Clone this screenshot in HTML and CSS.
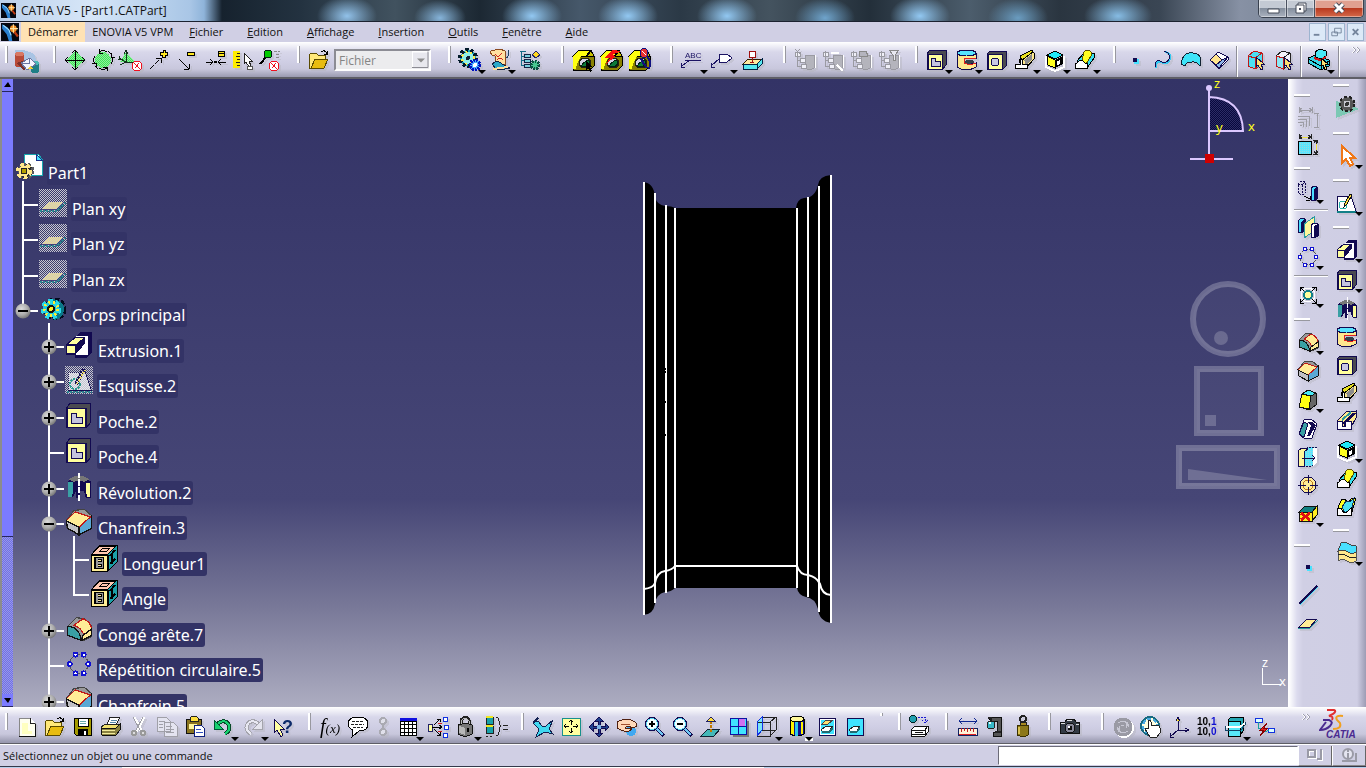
FILE: index.html
```html
<!DOCTYPE html>
<html lang="fr">
<head>
<meta charset="utf-8">
<title>CATIA V5 - [Part1.CATPart]</title>
<link rel="stylesheet" href="styles.css">
</head>
<body>
<svg class="sprite" width="0" height="0" aria-hidden="true">
<defs>
<pattern id="dither" width="2" height="2" patternUnits="userSpaceOnUse"><rect width="1" height="1" fill="#c6c6ce"/><rect x="1" y="1" width="1" height="1" fill="#c6c6ce"/></pattern>
<pattern id="gdither" width="2" height="2" patternUnits="userSpaceOnUse"><rect width="2" height="2" fill="#3fe05a"/><rect width="1" height="1" fill="#8ff09a"/><rect x="1" y="1" width="1" height="1" fill="#8ff09a"/></pattern>
<pattern id="cdither" width="2" height="2" patternUnits="userSpaceOnUse"><rect width="2" height="2" fill="#5ae6ff"/><rect width="1" height="1" fill="#9ad8dc"/></pattern>
<pattern id="ndither" width="2" height="2" patternUnits="userSpaceOnUse"><rect width="2" height="2" fill="#08083c"/><rect width="1" height="1" fill="#2c2c66"/><rect x="1" y="1" width="1" height="1" fill="#2c2c66"/></pattern>
<radialGradient id="ball" cx="40%" cy="35%" r="70%"><stop offset="0" stop-color="#dcdcdc"/><stop offset=".6" stop-color="#aaa"/><stop offset="1" stop-color="#707070"/></radialGradient>
</defs>

<symbol id="i-app" viewBox="0 0 16 16"><rect width="16" height="16" fill="#04060f"/><path d="M1 1l5 3 3 5 1 7h-3l-2-6-4-5z" fill="#2a7fd0"/><path d="M2 2l5 4 2 5" stroke="#9fe0ff" fill="none"/><circle cx="11" cy="5" r="3" fill="#f08a20"/><path d="M8 5h7M11 1v8" stroke="#ffe2a0"/><path d="M12 8l3 4" stroke="#c03a10" stroke-width="2"/></symbol>

<symbol id="i-send" viewBox="0 0 28 28"><path d="M2 4q12-1 20 5l2 12-12 3-10-3z" fill="#a9c4e4"/><path d="M2 8v12q4 3 9 0V8z" fill="#b84a38"/><ellipse cx="6.500" cy="8" rx="4.500" ry="2" fill="#d87864"/><path d="M3 17l8 7 4-4-6-5z" fill="#7c302a"/><path d="M18 17v9q4 2 8 0v-9z" fill="#1f7f86"/><ellipse cx="22" cy="17" rx="4" ry="2" fill="#4cb8b8"/><path d="M8 17l9-5 6 6-9 6z" fill="#f4f4ff" stroke="#6a74a0"/><path d="M8 17l8 1 1-6" fill="none" stroke="#6a74a0"/><path d="M14 23l3-3 3 3z" fill="#f0d040"/></symbol>
<symbol id="i-move" viewBox="0 0 28 28"><path d="M14 5l9 9-9 9-9-9z" fill="url(#gdither)"/><path d="M4 14h20M14 4v20M11 7l3-3 3 3M11 21l3 3 3-3M7 11l-3 3 3 3M21 11l3 3-3 3" stroke="#000" fill="none"/></symbol>
<symbol id="i-rot" viewBox="0 0 28 28"><circle cx="14" cy="14" r="8" fill="url(#gdither)"/><path d="M10 6q4-3 8 0M22 10q3 4 0 8M18 22q-4 3-8 0M6 18q-3-4 0-8M10 3v4h4M26 11h-4v-4M18 25v-4h-4M3 17h4v4M19 5l3 3M6 20l3 3" stroke="#000" fill="none"/></symbol>
<symbol id="i-noplane" viewBox="0 0 28 28"><path d="M9 6l9 10H3z" fill="url(#gdither)"/><path d="M9 4v12M7 8l2-4 2 4M9 16l-7-4M9 16l-6 3M9 16h10M3 10l-1 3 3 0" stroke="#12301a" fill="none"/><circle cx="20" cy="20" r="5" fill="#fff" stroke="#f01020"/><path d="M17 17l6 6M18 22l4-5" stroke="#f01020"/></symbol>
<symbol id="i-plus" viewBox="0 0 28 28"><path d="M5 23L16 12M16 12h-5M16 12v5" stroke="#000" stroke-dasharray="6 1"/><path d="M18 4h2v2h2v3h-2v2h-3V9h-2V6h3z" fill="#ffe820" stroke="#000"/></symbol>
<symbol id="i-minus" viewBox="0 0 28 28"><path d="M6 13l10 10M16 23v-5M16 23h-5" stroke="#000"/><path d="M14 6h7v3h-7z" fill="#ffe820" stroke="#000"/></symbol>
<symbol id="i-equal" viewBox="0 0 28 28"><path d="M5 16h7M9 13l3 3-3 3M25 16h-8M20 13l-3 3 3 3" stroke="#000" fill="none"/><circle cx="14.500" cy="16" r="1.500"/><path d="M17 5h6v5h-6z" fill="#ffe820" stroke="#000"/><path d="M17 7h6" stroke="#000"/></symbol>
<symbol id="i-ruler" viewBox="0 0 28 28"><path d="M4 5h7v17H4z" fill="#ffee00"/><path d="M8 7h3M7 10h4M8 13h3M7 16h4M8 19h3" stroke="#222"/><path d="M15 7v11l2-2 3 5 2-1-2-5h3z" fill="#fff" stroke="#222"/><path d="M18 20h5v3h-5z" fill="#fff" stroke="#555"/></symbol>
<symbol id="i-nopin" viewBox="0 0 28 28"><path d="M10 10L3 18" stroke="#000" stroke-width="2"/><circle cx="11" cy="8" r="4" fill="#0c0" stroke="#021"/><path d="M17 5h6M19 8h4M19 11h4" stroke="#888" stroke-dasharray="3 1"/><circle cx="17" cy="20" r="5" fill="#fff" stroke="#f01020"/><path d="M14 17l6 6M15 22l4-5" stroke="#f01020"/></symbol>
<symbol id="i-folder" viewBox="0 0 28 28"><path d="M4 9l2-2h5l2 2h7v4h-9l-5 9H4z" fill="#ffe87a" stroke="#5a4a00"/><path d="M10 13h13l-4 9H6z" fill="#e8bc10" stroke="#5a4a00"/><path d="M16 6q4-3 6 2M22 9l-3-1M22 9l1-4" stroke="#000" fill="none"/></symbol>
<symbol id="i-gears" viewBox="0 0 28 28"><circle cx="12" cy="12" r="8" fill="#18a8b8" stroke="#021a2a" stroke-width="4" stroke-dasharray="3 2"/><circle cx="12" cy="12" r="6" fill="#8ff0e8" stroke="#ffe94a" stroke-width="2" stroke-dasharray="2 3"/><circle cx="12" cy="12" r="2" fill="#123"/><circle cx="19" cy="19" r="5" fill="#4aa8ff" stroke="#0010c0" stroke-width="3" stroke-dasharray="2 1"/><circle cx="19" cy="19" r="2" fill="#fff"/></symbol>
<symbol id="i-scroll" viewBox="0 0 28 28"><path d="M5 5q9-3 14 0v13H9V10q-5 0-4-5z" fill="#ffe0a0" stroke="#8a4a20"/><path d="M9 8l3 3 4-4M11 14q3-3 6 0" stroke="#d02020" fill="none"/><path d="M6 18q6-5 10 0l8 4q-7 2-14 1z" fill="#2aa8c8" stroke="#124"/><path d="M20 12q4-2 2-8" stroke="#246" fill="none"/><path d="M7 23l15-2" stroke="#ffe0a0" stroke-width="2"/></symbol>
<symbol id="i-treegear" viewBox="0 0 28 28"><path d="M5 6v13M5 10h8M5 14h8M5 19h8M4 5h6" stroke="#146a86"/><path d="M8 8h6v3H8zM8 13h6v3H8zM8 18h6v3H8z" fill="#7ad0e0" stroke="#124"/><path d="M16 9l4-4 4 4-4 3z" fill="#ffd820" stroke="#226"/><circle cx="19" cy="19" r="4" fill="#48c890" stroke="#0a5040" stroke-width="3" stroke-dasharray="2 1"/></symbol>
<symbol id="nut" viewBox="0 0 28 28"><path d="M4 10l6-6h12l3 6v10l-4 4H4z" fill="#8a8200" stroke="#000"/><path d="M4 10l6-6h12l-5 6z" fill="#ffff10" stroke="#000"/><path d="M4 10h8l-4 8-1 5H4z" fill="#ffff10"/><path d="M22 5l3 5-7 0z" fill="#c8c000" stroke="#000"/><ellipse cx="16" cy="17" rx="6" ry="5" fill="#d4d4e6" stroke="#221"/><path d="M12 20q6-8 9-4q-1 5-6 5z" fill="#0a7a38" stroke="#021"/></symbol>
<symbol id="i-nut1" viewBox="0 0 28 28"><use href="#nut"/><path d="M17 15v9l2-2 2 4 2-1-2-4h3z" fill="#000"/></symbol>
<symbol id="i-nut2" viewBox="0 0 28 28"><use href="#nut"/><path d="M15 4l-8 8 6 0-4 6 10-8-4-1 9-4z" fill="#f81010"/></symbol>
<symbol id="i-nut3" viewBox="0 0 28 28"><use href="#nut"/><ellipse cx="19" cy="7" rx="4" ry="5" fill="#e83030" stroke="#101080"/><path d="M17 5l4 4" stroke="#fff"/><path d="M22 11q5 4 2 12M16 12q1 4 6 10" stroke="#101080" stroke-width="2" fill="none"/></symbol>
<symbol id="i-tag" viewBox="0 0 28 28"><path d="M11 8h8l5 4-5 4h-8z" fill="#fff" stroke="#1c1464"/><path d="M11 13l-8 7M3 21v-4M3 21h4" stroke="#1c1464" fill="none"/></symbol>
<symbol id="i-stamp" viewBox="0 0 28 28"><path d="M5 18l5-5h14l-5 5z" fill="#ffe9a0" stroke="#302000"/><path d="M5 18h14v5H5zM19 18l5-5v5l-5 5z" fill="#58e8f0" stroke="#024"/><path d="M11 5h6v6h-6z" fill="#fff" stroke="#a01010"/><path d="M14 11v5M12 16h4" stroke="#a01010"/></symbol>
<symbol id="gcyl" viewBox="0 0 28 28"><path d="M14 9h9v13q-5 3-9 0z" fill="#b4b4bc" stroke="#9a9aa2"/><path d="M6 5v16M4 6h5v4H4zM6 14h4M6 20h4M9 12h5v4H9zM10 18h5v4h-5z" stroke="#9a9aa2" fill="#f0f0f8"/><path d="M24 9v13" stroke="#fff"/></symbol>
<symbol id="i-g1" viewBox="0 0 28 28"><use href="#gcyl"/><path d="M4 3l5 5M9 3L4 8" stroke="#9a9aa2"/></symbol>
<symbol id="i-g2" viewBox="0 0 28 28"><use href="#gcyl"/><path d="M12 7h8M18 19l6 6" stroke="#fff" stroke-width="2"/></symbol>
<symbol id="i-g3" viewBox="0 0 28 28"><use href="#gcyl"/><path d="M12 5h7l2 5-9 1z" fill="#b4b4be" stroke="#888"/></symbol>
<symbol id="i-g4" viewBox="0 0 28 28"><use href="#gcyl"/><path d="M14 4h10l-4 5v5h-2V9z" fill="#e8e8f0" stroke="#888"/></symbol>

<symbol id="i-pocket" viewBox="0 0 28 28"><path d="M4 8l3-4h16v15l-3 4H4z" fill="#4a4a50" stroke="#120a50"/><path d="M5 8h14v15H5z" fill="#ffff9c" stroke="#120a50"/><path d="M4 8h1v15h-1zM19 8h1v15h-1z" fill="#120a50"/><path d="M8 12h4v3h5v5H8z" fill="#c4c4de" stroke="#120a50"/></symbol>
<symbol id="i-groove" viewBox="0 0 28 28"><path d="M4 7v14q9 6 19 0v-4l-6 1-6-2 1-4h11V7z" fill="#ffe88e" stroke="#120a50"/><ellipse cx="13.500" cy="7" rx="9.500" ry="3" fill="#58e4ff" stroke="#120a50"/><path d="M23 12H11v5l6 2 6-2" stroke="#e02020" fill="none"/><path d="M13 14h6l3 2-6 2-4-1z" fill="#34404a"/></symbol>
<symbol id="i-hole" viewBox="0 0 28 28"><path d="M4 8l3-3h16v15l-3 3H4z" fill="#4a4a50" stroke="#120a50"/><path d="M5 8h14v15H5z" fill="#ffff9c" stroke="#120a50"/><circle cx="12" cy="16" r="4" fill="#c8c8e4" stroke="#120a50"/></symbol>
<symbol id="i-rib" viewBox="0 0 28 28"><path d="M8 16l2-6L21 5l2 2v6l-8 9z" fill="#ffe98e" stroke="#000"/><path d="M9 10l12-6 1 2-11 8z" fill="#e8e020" stroke="#000"/><path d="M13 14l8-6v5l-6 6z" fill="#8c8c8c"/><path d="M4 18h5v-5h2v5h5v4H4z" fill="#fff" stroke="#000"/></symbol>
<symbol id="i-slot" viewBox="0 0 28 28"><path d="M4 14l9-9 10-1v7L17 22H4z" fill="#ffe98e" stroke="#120a50"/><path d="M10 15l9-9 4 0-8 9v4h-4z" fill="#120a50"/><path d="M9 13l9-8" stroke="#2a9aa0" stroke-width="2"/><path d="M4 14h5v5h3v-5h6v8H4z" fill="#fff" stroke="#120a50"/></symbol>
<symbol id="i-cube" viewBox="0 0 28 28"><path d="M5 10v11l9 4 9-4V10" fill="none" stroke="#fff" stroke-width="2"/><path d="M6 9l8-4 8 4-8 4z" fill="#20e8f8" stroke="#000"/><path d="M6 10l8 4v8l-7-3z" fill="#ffff20" stroke="#000"/><path d="M14 14l8-4v8l-8 4z" fill="#000"/><path d="M16 15l3-1v4l-3 1z" fill="#fff"/></symbol>
<symbol id="i-loft" viewBox="0 0 28 28"><path d="M6 15l7-8h10v5L16 22H6z" fill="#38e0f0" stroke="#000"/><path d="M11 14l2-8q4-4 7 0v4l-5 8z" fill="#ffff20" stroke="#5a5000"/><path d="M4 22v-5h2q4-5 8 0h2v5z" fill="#fff" stroke="#000"/></symbol>
<symbol id="i-rloft" viewBox="0 0 28 28"><path d="M5 14l4-8h3l3 4 4-5h4l-5 17H5z" fill="#ffff20" stroke="#000"/><path d="M9 14l4-6 4 1 4-4-2 10-7 5z" fill="#48e0f4" stroke="#135"/><path d="M4 22v-7h4q2 6 6 4l4-4v7z" fill="#fff" stroke="#000"/></symbol>
<symbol id="i-point" viewBox="0 0 28 28"><path d="M13 13h5v5h-5z" fill="#4ae2ff"/><path d="M12 12h4v4h-4z" fill="#120a50"/></symbol>
<symbol id="i-spline" viewBox="0 0 28 28"><path d="M7 22q0-8 5-6q6 4 9-3q2-6-5-7" fill="none" stroke="#32c8f0" stroke-width="2"/><path d="M6 21q0-8 5-6q6 4 9-2q2-6-5-8" fill="none" stroke="#120a50"/></symbol>
<symbol id="i-sweep" viewBox="0 0 28 28"><path d="M4 18Q6 5 16 7q8 0 8 9l-1 4q-4-5-8-4-6 0-7 4z" fill="#3ee4f8" stroke="#123"/></symbol>
<symbol id="i-pbox" viewBox="0 0 28 28"><path d="M5 14l8-8 10 5v3l-9 9z" fill="#fff" stroke="#120a50"/><path d="M5 14l6-6 6 6-5 6z" fill="#ffe48c" stroke="#120a50"/><path d="M17 14l6-3-9 11-3-3z" fill="#8fb8e8" stroke="#120a50"/></symbol>
<symbol id="i-cc1" viewBox="0 0 28 28"><path d="M7 10l6-5 8 2v11l-7 5-7-3z" fill="#4ce0f4" stroke="#c01818"/><path d="M7 10l7 2 7-5M14 12v11" stroke="#c01818" fill="none"/><path d="M15 11v10l2-2 3 5 2-1-2-5h3z" fill="#ffe070" stroke="#120a50"/></symbol>
<symbol id="i-cc2" viewBox="0 0 28 28"><path d="M7 10l6-5 8 2v11l-7 5-7-3z" fill="#f4f4fc" stroke="#222"/><path d="M7 10l7 2v11l-7-3z" fill="#8ce8f4" stroke="#c01818"/><path d="M14 12l7-5" stroke="#222"/><path d="M15 11v10l2-2 3 5 2-1-2-5h3z" fill="#ffe070" stroke="#120a50"/></symbol>
<symbol id="i-asm" viewBox="0 0 28 28"><path d="M3 12l8-3 13 5v6l-8 4-13-7z" fill="#34d8e8" stroke="#000"/><path d="M3 13l13 7 8-5M16 20v4" fill="none" stroke="#000"/><path d="M10 6l5-3 6 2v5l-5 3-6-2z" fill="#48e8f4" stroke="#000"/><path d="M9 12l6 2 6-3" stroke="#d01818" stroke-width="2" fill="none"/><path d="M16 12v9l2-2 2 5 2-1-2-5h3z" fill="#ffe070" stroke="#000"/></symbol>

<symbol id="i-new" viewBox="0 0 28 28"><path d="M6 5h11l5 5v13H6z" fill="#fffff0" stroke="#888"/><path d="M17 5v5h5" fill="#fff" stroke="#222"/><path d="M9 10h6v8h4v3H9z" fill="#ffffc0"/><path d="M6 23h16V11" fill="none" stroke="#111"/></symbol>
<symbol id="i-save" viewBox="0 0 28 28"><path d="M5 5h17v17H7l-2-2z" fill="#a59a00" stroke="#000"/><path d="M9 5h10v8H9z" fill="#fff" stroke="#000"/><path d="M11 8h6M11 10h6" stroke="#6aa"/><path d="M9 16h10v6H9z" fill="#000"/><path d="M15 18h2v4h-2z" fill="#fff"/></symbol>
<symbol id="i-print" viewBox="0 0 28 28"><path d="M10 12l3-8h10l-4 8z" fill="#fff" stroke="#222"/><path d="M14 7h6M13 9h6" stroke="#58a"/><path d="M4 14l5-3h14l-4 4H4z" fill="#f0e070" stroke="#222"/><path d="M4 15h15l4-4v6l-4 5H5z" fill="#8a8240" stroke="#111"/><path d="M5 17h13M5 20h13" stroke="#f4ec9c"/></symbol>
<symbol id="i-cut" viewBox="0 0 28 28"><path d="M9 4l8 15M19 4l-8 15" stroke="#fff" stroke-width="3"/><path d="M8 4l8 15M18 4l-8 15" stroke="#a0a0a8"/><circle cx="9" cy="20" r="2" fill="#ddd" stroke="#999" stroke-width="2"/><circle cx="18" cy="20" r="2" fill="#ddd" stroke="#999" stroke-width="2"/></symbol>
<symbol id="i-copy" viewBox="0 0 28 28"><path d="M4 4h9l4 4v10H4zM11 9h9l4 4v10H11z" fill="#e4e4f0" stroke="#a0a0a8"/><path d="M6 8h6M6 11h4M6 14h4M13 13h6M13 16h8M13 19h8" stroke="#a0a0a8"/></symbol>
<symbol id="i-paste" viewBox="0 0 28 28"><path d="M5 6h15v14H5z" fill="#8a7420" stroke="#111"/><path d="M9 5l2-2h4l2 2v3H9z" fill="#ffe040" stroke="#222"/><path d="M8 11h8v5H8z" fill="#fff6a0"/><path d="M13 12h7l3 3v8H13z" fill="#fff" stroke="#102080"/><path d="M15 16h5M15 19h7" stroke="#3050c0"/></symbol>
<symbol id="i-undo" viewBox="0 0 28 28"><path d="M8 11q8-6 12 1 2 5-4 9" fill="none" stroke="#064a28" stroke-width="4"/><path d="M8 11q8-6 12 1 2 5-4 9" fill="none" stroke="#18d070" stroke-width="2"/><path d="M5 7v9h9z" fill="#18d070" stroke="#053"/></symbol>
<symbol id="i-redo" viewBox="0 0 28 28"><path d="M20 11q-8-6-12 1-2 5 4 9" fill="none" stroke="#a4a4ac" stroke-width="4"/><path d="M20 11q-8-6-12 1-2 5 4 9" fill="none" stroke="#e8e8f2" stroke-width="2"/><path d="M23 7v9h-9z" fill="#e4e4ee" stroke="#a4a4ac"/></symbol>
<symbol id="i-talk" viewBox="0 0 28 28"><path d="M14 4q10 0 10 7t-9 7l-7 6 1-7q-5-2-5-6 0-7 10-7z" fill="#fff" stroke="#000"/><path d="M8 8h12M7 11h13M9 14h10" stroke="#222" stroke-dasharray="3 1"/></symbol>
<symbol id="i-link" viewBox="0 0 28 28"><circle cx="14" cy="8" r="3" fill="#e0e0ea" stroke="#aaaab2" stroke-width="2"/><circle cx="14" cy="19" r="3" fill="#e0e0ea" stroke="#aaaab2" stroke-width="2"/><path d="M14 10v7" stroke="#aaaab2" stroke-width="2"/></symbol>
<symbol id="i-table" viewBox="0 0 28 28"><path d="M6 8h16v14H6z" fill="#fff" stroke="#000"/><path d="M6 5h17v3H6z" fill="#1010e0"/><path d="M6 11h16M6 15h16M6 19h16M10 8v14M14 8v14M18 8v14" stroke="#000" fill="none"/></symbol>
<symbol id="i-rel" viewBox="0 0 28 28"><path d="M4 11h4v7H4z" fill="#ffffa0" stroke="#226"/><path d="M8 14h10M10 12l6-6M10 16l6 6M13 6h3v3M15 12l3 2-3 2M16 19v3h-3" stroke="#000" fill="none"/><path d="M19 4h4v4h-4zM20 12h4v4h-4zM19 20h4v4h-4z" fill="#fff" stroke="#1030e0"/><path d="M14 10h4M14 18h4" stroke="#d02020"/></symbol>
<symbol id="i-lock" viewBox="0 0 28 28"><path d="M9 12V7q5-6 8 0v5" fill="none" stroke="#222" stroke-width="3"/><path d="M9 12V8q4-6 8 0v5" fill="none" stroke="#bbb"/><path d="M6 12l8-2 6 2v9l-7 3-7-3z" fill="#777" stroke="#111"/><path d="M7 13l6 2v7l-6-2z" fill="#b8b8b8"/><path d="M16 15v4" stroke="#000" stroke-width="2"/></symbol>
<symbol id="i-rule" viewBox="0 0 28 28"><path d="M4 4h7v7H4zM4 13h7v7H4z" fill="#18a0a8" stroke="#222"/><path d="M4 4h7M4 13h7" stroke="#f0e820" stroke-width="2"/><path d="M4 23h2M8 23h2" stroke="#222"/><path d="M14 4q3 0 3 4v3l2 2-2 2v4q0 4-3 4M21 12h5M21 16h5" stroke="#222" fill="none"/></symbol>
<symbol id="i-fly" viewBox="0 0 28 28"><path d="M5 8l4 0 4 5 4 0 7-6-4 9 4 5-8-2-9 5 3-8-6-6z" fill="#40d8f0" stroke="#122050"/><path d="M4 10l5-5" stroke="#122050" stroke-width="2"/></symbol>
<symbol id="i-fit" viewBox="0 0 28 28"><path d="M5 5h18v17H5z" fill="#ffffa0" stroke="#18908c"/><path d="M14 7v5M14 20v-5M7 13h5M21 13h-5M12 9l2-2 2 2M12 18l2 2 2-2M9 11l-2 2 2 2M19 11l2 2-2 2" stroke="#000" fill="none"/></symbol>
<symbol id="i-pan" viewBox="0 0 28 28"><path d="M14 4l4 4h-3v5h5v-3l4 4-4 4v-3h-5v5h3l-4 4-4-4h3v-5H8v3l-4-4 4-4v3h5V8h-3z" fill="#20408c" stroke="#120a50"/><path d="M12 12h4v4h-4z" fill="#7db2e4"/></symbol>
<symbol id="i-rotate" viewBox="0 0 28 28"><circle cx="18" cy="18" r="5" fill="#40a8f0"/><path d="M4 9q7-4 14-2 6 2 6 6l-4 2q-6-3-8 0l7 1-4 3q-6-1-11-4z" fill="#ffd8b8" stroke="#502010"/><path d="M8 11h9" stroke="#a05030"/></symbol>
<symbol id="mag" viewBox="0 0 28 28"><path d="M15 15l8 8" stroke="#120a50" stroke-width="4"/><path d="M16 16l6 6" stroke="#70c8f4" stroke-width="2"/><circle cx="11" cy="11" r="6.500" fill="#f4ffff" stroke="#120a50"/><circle cx="11" cy="11" r="5.500" fill="none" stroke="#5ad8f0"/></symbol>
<symbol id="i-zin" viewBox="0 0 28 28"><use href="#mag"/><path d="M8 11h6M11 8v6" stroke="#000" stroke-width="2"/></symbol>
<symbol id="i-zout" viewBox="0 0 28 28"><use href="#mag"/><path d="M8 11h6" stroke="#000" stroke-width="2"/></symbol>
<symbol id="i-normal" viewBox="0 0 28 28"><path d="M4 23l7-7h12l-6 7z" fill="#44b8b8" stroke="#123"/><path d="M14 8v12" stroke="#c07800" stroke-width="2" stroke-dasharray="3 1"/><path d="M14 4l-4 4h8z" fill="#ffe040" stroke="#222060"/></symbol>
<symbol id="i-multi" viewBox="0 0 28 28"><path d="M8 8h16v16H8z" fill="#777"/><path d="M5 5h16v16H5z" fill="#40e4ff" stroke="#1010a0"/><path d="M13 6h7v7h-7z" fill="#d070f0"/><path d="M13 5v16M5 13h16" stroke="#1010a0"/></symbol>
<symbol id="i-iso" viewBox="0 0 28 28"><path d="M4 9l5-5v14l-5 5z" fill="#7ae4f8"/><path d="M4 9h13v14H4zM4 9l5-5h14l-6 5M23 4v13l-6 6M9 4v13h14" fill="none" stroke="#222"/><path d="M4 9v14l5-6V4z" fill="none" stroke="#1030e0"/></symbol>
<symbol id="i-shade" viewBox="0 0 28 28"><path d="M7 6v15q7 4 14 0V6z" fill="#10108c" stroke="#000"/><path d="M8 8h3v14l-3-1zM18 9h2v12h-2z" fill="#fff200"/><path d="M12 9h3v14h-3z" fill="#30c8e8"/><ellipse cx="14" cy="6" rx="7" ry="3" fill="#fff89a" stroke="#000"/></symbol>
<symbol id="i-hide" viewBox="0 0 28 28"><path d="M6 5h16v17H6z" fill="#40e4ff" stroke="#120a50"/><path d="M7 6h14v15H7z" fill="none" stroke="#fff"/><path d="M8 17l5-4h7l-4 5H9z" fill="#fff" stroke="#222"/><path d="M9 11l4-4h7l-5 4z" fill="#ffe070" stroke="#444"/><path d="M16 18l4-5v3l-4 4H9v-2z" fill="#226a70"/></symbol>
<symbol id="i-swap" viewBox="0 0 28 28"><path d="M6 5h16v17H6z" fill="#40e4ff" stroke="#120a50"/><path d="M8 17l5-4h6l-3 5H9z" fill="#fff" stroke="#222"/><path d="M16 18l3-5v3l-3 4H9v-2z" fill="#226a70"/></symbol>
<symbol id="i-cap" viewBox="0 0 28 28"><circle cx="7" cy="6" r="3.500" fill="#20a0b0" stroke="#022"/><path d="M12 4h7v5M16 7l3 3 3-3" stroke="#1818d0" fill="none" stroke-dasharray="2 1"/><path d="M5 17l4-4h13v6l-3 4H5z" fill="#fff" stroke="#111"/><path d="M5 17h14v6M19 17l3-4M9 19h8M5 21h14" fill="none" stroke="#111"/></symbol>
<symbol id="i-meas" viewBox="0 0 28 28"><path d="M6 8h18M9 5L6 8l3 3M21 5l3 3-3 3" stroke="#102890" fill="none"/><path d="M5 15h19v7H5z" fill="#fff2d8" stroke="#102060"/><path d="M6 21h17" stroke="#e02020"/><path d="M8 15v4M11 15v3M14 15v4M17 15v3M20 15v4" stroke="#c02020"/></symbol>
<symbol id="i-caliper" viewBox="0 0 28 28"><path d="M10 4h10v19h-8v-3l4-2V8h-6z" fill="#555" stroke="#111"/><circle cx="10" cy="12" r="4" fill="#38b8c8" stroke="#222"/><path d="M7 5h3v4M14 19h6" stroke="#222" stroke-width="2"/><circle cx="9" cy="10" r="1.500" fill="#dff"/></symbol>
<symbol id="i-weight" viewBox="0 0 28 28"><circle cx="14" cy="6" r="3" fill="none" stroke="#222" stroke-width="2"/><path d="M11 9h6v3h-6z" fill="#a88a20" stroke="#222"/><path d="M8 12h11v10q-5 3-11 0z" fill="#8c7818" stroke="#3a3000"/><path d="M10 14v7" stroke="#d8c050" stroke-width="2"/></symbol>
<symbol id="i-camera" viewBox="0 0 28 28"><path d="M4 9h5l2-3h7l2 3h3v11H4z" fill="#333a44" stroke="#111"/><path d="M5 10h4M20 11h3M11 7h5" stroke="#ddd"/><circle cx="14" cy="15" r="5" fill="#889" stroke="#111"/><circle cx="14" cy="15" r="2.500" fill="#111"/><circle cx="13" cy="14" r="1" fill="#fff"/></symbol>
<symbol id="i-update" viewBox="0 0 28 28"><circle cx="15" cy="15" r="9" fill="none" stroke="#fff" stroke-width="2"/><circle cx="14" cy="14" r="8" fill="#c8c8d4" stroke="#9a9aa4" stroke-width="3"/><path d="M8 14q4-6 9-2M20 14q-4 6-9 2M11 14h6" stroke="#9a9aa4" stroke-width="3" fill="none"/></symbol>
<symbol id="i-hand" viewBox="0 0 28 28"><circle cx="13" cy="13" r="9" fill="#ffffe0" stroke="#186a80" stroke-width="2"/><circle cx="13" cy="13" r="7" fill="none" stroke="#48a8e0" stroke-width="2" stroke-dasharray="4 2"/><path d="M11 8q2-2 3 1v4q2-2 3 0 2-2 3 0 3-1 3 2v5l-3 4h-7l-5-8q2-2 3 0z" fill="#fff" stroke="#222"/></symbol>
<symbol id="i-axis" viewBox="0 0 28 28"><path d="M13 5v12M13 17h11M13 17l-8 7M11 8l2-4 2 4M20 15l4 2-4 2M5 20v4h4" stroke="#120a50" fill="none"/><path d="M12 8l1-3 1 3z" fill="#ffe820"/></symbol>
<symbol id="i-mean" viewBox="0 0 28 28"><path d="M7 7l3-3h12v14l-3 5H7z" fill="#24a8b4" stroke="#000"/><path d="M7 8h12v15H7z" fill="#58e8f8" stroke="#000"/><path d="M4 14h15l5-4" fill="none" stroke="#fff" stroke-width="2"/><path d="M4 13v4h16l4-5V9" stroke="#146" fill="none"/></symbol>
<symbol id="i-bolt" viewBox="0 0 28 28"><path d="M4 5h7v4H4zM17 15h6v4h-6z" fill="#dff" stroke="#1030e0"/><path d="M7 9v6h4M14 19l4-2" stroke="#18a0a0" fill="none"/><path d="M16 10l-7 7h4l-4 6 8-8h-4z" fill="#e02020" stroke="#800"/></symbol>

<symbol id="i-cons" viewBox="0 0 28 28"><path d="M5 4v6M18 4v6M5 7h13M8 5L5 7l3 2M15 5l3 2-3 2M23 10v14M20 10h5M20 24h5M4 13h11v10M4 16h8v8M4 19h5v5M6 22h2" fill="none" stroke="#9c9ca4"/></symbol>
<symbol id="i-dim" viewBox="0 0 28 28"><path d="M4 10h13v13H4z" fill="url(#cdither)" stroke="#000"/><path d="M5 3v5M17 3v5M5 6h12M8 4L5 6l3 2M14 4l3 2-3 2M22 9v14M19 9h5M19 23h5M20 12l2-3 2 3M20 20l2 3 2-3" fill="none" stroke="#222"/><path d="M8 6h6M22 13v6" stroke="#f0e040"/></symbol>
<symbol id="i-trans" viewBox="0 0 28 28"><path d="M4 7l3-3 4 1v11l-3 2-4-2zM4 7l4 1 3-3M8 8v10" fill="none" stroke="#120a50" stroke-dasharray="2 1"/><path d="M10 19l6 3M16 23v-4M16 23h-4" stroke="#000"/><path d="M17 11l3-2 3 1v12l-3 2-3-1z" fill="#48e0ff" stroke="#120a50"/><path d="M20 12l3-2v12l-3 2z" fill="#120a50"/></symbol>
<symbol id="i-mirror" viewBox="0 0 28 28"><path d="M4 7l3-3 4 1v12l-4 2-3-1z" fill="#48e0ff" stroke="#120a50"/><path d="M7 8l4-3v12l-4 2z" fill="#120a50"/><path d="M10 10l10-7v14l-10 7z" fill="#fff79a" stroke="#2a9aa0"/><path d="M17 11l3-2 4 1v12l-4 2-3-1z" fill="#fff" stroke="#120a50"/><path d="M20 12l4-2v12l-4 2z" fill="#120a50"/></symbol>
<symbol id="i-pattern" viewBox="0 0 28 28"><circle cx="14" cy="14" r="8" fill="none" stroke="#555" stroke-dasharray="2 1"/><g fill="#1010d0"><circle cx="11" cy="6" r="2.500"/><circle cx="18" cy="6" r="2.500"/><circle cx="6" cy="14" r="2.500"/><circle cx="22" cy="14" r="2.500"/><circle cx="11" cy="22" r="2.500"/><circle cx="18" cy="22" r="2.500"/></g><g fill="#fff"><circle cx="11" cy="6" r="1"/><circle cx="18" cy="6" r="1"/><circle cx="6" cy="14" r="1"/><circle cx="22" cy="14" r="1"/><circle cx="11" cy="22" r="1"/><circle cx="18" cy="22" r="1"/></g></symbol>
<symbol id="i-scale" viewBox="0 0 28 28"><path d="M6 6l16 16M22 6L6 22M6 10V6h4M18 6h4v4M6 18v4h4M18 22h4v-4" stroke="#000" fill="none"/><circle cx="14" cy="14" r="7" fill="none" stroke="#fff"/><circle cx="14" cy="14" r="4" fill="#ffff9c" stroke="#128088" stroke-width="2"/></symbol>
<symbol id="i-fillet" viewBox="0 0 28 28"><path d="M5 12l7-7 6 1 6 6v8l-6 3z" fill="#999" stroke="#444"/><path d="M5 12q9 0 11 11l-11-4z" fill="#3aa0a4" stroke="#111"/><path d="M10 11l7-5q6 2 7 8l-6 5q-2-6-8-8z" fill="#ffec96" stroke="#c01818"/><path d="M16 23l8-4v-5l-7 5z" fill="#ffec96" stroke="#111"/></symbol>
<symbol id="i-chamfer" viewBox="0 0 28 28"><path d="M10 5l8-1 6 5v10l-10 5-10-6v-5z" fill="#999" stroke="#444"/><path d="M14 17l10-8v10l-10 5z" fill="#5aa8d4" stroke="#111"/><path d="M4 13l7-7 12 4-9 8z" fill="#ffec96" stroke="#c01818"/><path d="M4 13l10 5v6L5 19z" fill="#c0c0c4" stroke="#111"/></symbol>
<symbol id="i-draft" viewBox="0 0 28 28"><path d="M9 8l5-4 8 3v12l-7 5-9-3z" fill="#666" stroke="#111"/><path d="M8 8l6-4 8 3-5 3z" fill="#48e8f4" stroke="#111"/><path d="M8 8l9 2-2 13-10-2z" fill="#ffff10" stroke="#111"/></symbol>
<symbol id="i-shell" viewBox="0 0 28 28"><path d="M10 5l7-1 6 5-5 14-7 1-6-5z" fill="#fff" stroke="#120a50"/><path d="M5 19l5-12 4 2-4 13z" fill="#3aa0a4" stroke="#120a50"/><path d="M13 7l5 0 4 3-6 11-3 0 4-10z" fill="#120a50"/></symbol>
<symbol id="i-thick" viewBox="0 0 28 28"><path d="M10 7l5-3h8l-1 15-4 4h-8z" fill="url(#cdither)" stroke="#120a50" stroke-dasharray="2 1"/><path d="M19 5h4v14l-4 4z" fill="#fff"/><path d="M4 8l4-3 6 1-4 3v14H4z" fill="#fff79a" stroke="#120a50"/><path d="M8 15h13M18 12l3 3-3 3" stroke="#120a50" fill="none"/></symbol>
<symbol id="i-thread" viewBox="0 0 28 28"><circle cx="14" cy="14" r="8" fill="#ffec96" stroke="#120a50"/><circle cx="14" cy="14" r="5" fill="none" stroke="#c07820"/><path d="M4 14h8M16 14h8M14 4v8M14 16v8" stroke="#120a50"/></symbol>
<symbol id="i-remove" viewBox="0 0 28 28"><path d="M5 12l6-6h12l-5 6z" fill="#128080" stroke="#111"/><path d="M18 12l5-6v9l-5 6z" fill="#ffee20" stroke="#111"/><path d="M5 12h13v9H5z" fill="#ffee20" stroke="#111"/><path d="M7 13l9 7M16 13l-9 7" stroke="#e01010" stroke-width="3"/></symbol>
<symbol id="i-line" viewBox="0 0 28 28"><path d="M6 24L24 6" stroke="#4ae2ff"/><path d="M5 23L23 5" stroke="#120a50" stroke-width="2"/></symbol>
<symbol id="i-plane" viewBox="0 0 28 28"><path d="M5 18l8-8h10l-7 8z" fill="#ffec96" stroke="#120a50"/><path d="M4 19h12l8-8" fill="none" stroke="#2a9aa0"/></symbol>
<symbol id="i-mat" viewBox="0 0 28 28"><path d="M3 8v17l23-9-6-3z" fill="#7cc8b4"/><circle cx="14" cy="11" r="7" fill="#888" stroke="#222" stroke-width="3" stroke-dasharray="3 2"/><circle cx="14" cy="11" r="5" fill="#c8c8d0" stroke="#555" stroke-width="3"/><circle cx="14" cy="11" r="2" fill="#333"/></symbol>
<symbol id="i-select" viewBox="0 0 28 28"><path d="M9 4v17l4-4 4 7 3-2-3-6h5z" fill="#fff" stroke="#f07818" stroke-width="2"/></symbol>
<symbol id="i-sketch" viewBox="0 0 28 28"><path d="M4 7h14l5 15H4z" fill="#fff" stroke="#120a50"/><path d="M4 23h19" stroke="#128088" stroke-width="2"/><circle cx="10" cy="16" r="4" fill="none" stroke="#28b0a8"/><path d="M11 18l1-4 5-9 2 1-5 9z" fill="#ffe040" stroke="#111"/></symbol>
<symbol id="i-pad" viewBox="0 0 28 28"><path d="M11 8l4-4h9v16l-4 4h-9z" fill="#120a50"/><path d="M12 7h9v15h-9z" fill="#fff"/><path d="M4 14l7-6h7v5l-7 8H4z" fill="#ffff9c" stroke="#120a50"/><path d="M4 14h7v7H4z" fill="#ffff9c" stroke="#120a50"/><path d="M11 14l7-6v5l-7 8z" fill="#120a50"/></symbol>
<symbol id="i-shaft" viewBox="0 0 28 28"><path d="M5 10q4-5 9-5t9 5v12h-4l-1-5-3 0v6h-3v-6l-3 5H5z" fill="#120a50"/><path d="M6 8q8-6 16 0l-4 2q-4-2-8 0z" fill="#777"/><path d="M5 10h4v9l-1 3H5z" fill="#3aa0a4"/><path d="M19 10h4v12h-3l-1-4z" fill="#ffff9c" stroke="#120a50"/><path d="M14 2v23" stroke="#fff" stroke-dasharray="5 1"/></symbol>
<symbol id="i-surf" viewBox="0 0 28 28"><path d="M5 11q6-2 10 1t8 1v9q-4 3-9 0t-9 0z" fill="#ffe88c" stroke="#555"/><path d="M8 4q5-1 8 1t7 2v6q-4 3-8 0t-10-1z" fill="#48e0ff" stroke="#444"/><path d="M5 16q5-2 9 1t9 1" fill="none" stroke="#222"/></symbol>

<symbol id="i-part" viewBox="0 0 28 28"><path d="M9 1h14l4 5v16H9z" fill="#fff" stroke="#18a8b0"/><path d="M21 1l6 6h-6z" fill="#48e0ff" stroke="#18308a"/><circle cx="11" cy="18" r="7" fill="#2a2a2e" stroke="#5a5a5e" stroke-width="3" stroke-dasharray="3 2"/><circle cx="9" cy="18" r="5" fill="#ffe88c" stroke="#ffe88c" stroke-width="6" stroke-dasharray="3 2"/><circle cx="9" cy="18" r="3" fill="#b4a000" stroke="#222"/></symbol>
<symbol id="i-tplane" viewBox="0 0 28 28"><path d="M0 0h28v28H0z" fill="url(#dither)"/><path d="M3 20l7-8h15l-7 8z" fill="#f4e080" stroke="#45407a"/><path d="M3 20l7-8h15l-7 8z" fill="url(#dither)"/><path d="M1 22h17l9-9" fill="none" stroke="#2c8892" stroke-width="2" stroke-dasharray="2 1"/></symbol>
<symbol id="i-tsketch" viewBox="0 0 28 28"><path d="M0 0h28v28H0z" fill="url(#dither)"/><path d="M3 6h17l6 18H3z" fill="#e4e4f0" stroke="#120a50"/><path d="M3 6h17l6 18H3z" fill="url(#dither)"/><path d="M2 26h25" stroke="#2c8892" stroke-width="2" stroke-dasharray="2 1"/><circle cx="10" cy="18" r="5" fill="none" stroke="#2c9890" stroke-width="2" stroke-dasharray="2 1"/><path d="M11 18l8-15" stroke="#120a50" stroke-width="4" stroke-dasharray="2 1"/><path d="M12 18l8-14" stroke="#f0dc68" stroke-width="2" stroke-dasharray="2 1"/></symbol>
<symbol id="i-body" viewBox="0 0 28 28"><circle cx="16" cy="14" r="9" fill="#030c20" stroke="#030c20" stroke-width="5" stroke-dasharray="4 2"/><path d="M14 4q12 2 11 12-2 8-10 9z" fill="#0a7888"/><circle cx="12" cy="14" r="8" fill="#20c8d8" stroke="#28d8e8" stroke-width="5" stroke-dasharray="4 3"/><circle cx="12" cy="14" r="7" fill="none" stroke="#ffee30" stroke-width="3" stroke-dasharray="2 3"/><circle cx="12" cy="14" r="3" fill="#fff020" stroke="#111" stroke-width="2"/></symbol>
<symbol id="i-param" viewBox="0 0 28 28"><path d="M1 11L10 1h17v17l-9 9H1z" fill="#1ba0a8" stroke="#000"/><path d="M2 10l8-8h16l-8 8z" fill="#ffc8b0" stroke="#000"/><path d="M10 7l3-3h7l-3 3z" fill="none" stroke="#000"/><path d="M20 12l5-6M20 20l5-5M22 10v10" stroke="#000" stroke-width="2"/><path d="M1 11h16v16H1z" fill="#ffee96" stroke="#000"/><path d="M1 11h17M18 11v16" stroke="#000" stroke-width="2"/><path d="M4 13h10v5l-1 1 1 1v5H4z" fill="#000"/><path d="M6 14h7v10H6z" fill="#999"/><path d="M8 15h4v3H8zM8 20h4v3H8z" fill="#000"/><path d="M8 16h3v1H8zM8 21h3v1H8z" fill="#ffee96"/></symbol>
<symbol id="s-minus" viewBox="0 0 16 16"><circle cx="8" cy="8" r="7.500" fill="url(#ball)"/><path d="M3 7h10v2H3z"/></symbol>
<symbol id="s-plus" viewBox="0 0 16 16"><circle cx="8" cy="8" r="7.500" fill="url(#ball)"/><path d="M3 7h10v2H3zM7 3h2v10H7z"/></symbol>
</svg>

<header class="titlebar">
  <svg class="appicon"><use href="#i-app"/></svg>
  <h1 class="title">CATIA V5 - [Part1.CATPart]</h1>
  <div class="winbtns">
    <button class="winbtn" aria-label="Réduire"><svg viewBox="0 0 28 17"><path d="M9 9h11v4H9z" fill="#fff" stroke="#444a58"/></svg></button>
    <button class="winbtn" aria-label="Restaurer"><svg viewBox="0 0 28 17"><path d="M11 3h8v8h-8z" fill="#fff" stroke="#444a58"/><path d="M9 5h8v8H9z" fill="#fff" stroke="#444a58"/><path d="M12 8h2v2h-2z" fill="#444a58"/></svg></button>
    <button class="winbtn close" aria-label="Fermer"><svg viewBox="0 0 28 17"><path d="M10 4l8 8M18 4l-8 8" stroke="#444a58" stroke-width="5"/><path d="M10 4l8 8M18 4l-8 8" stroke="#fff" stroke-width="3"/></svg></button>
  </div>
</header>

<nav class="menubar" aria-label="Menu principal">
  <svg class="docicon"><use href="#i-app"/></svg>
  <button class="menu start">Démarrer</button><button class="menu tight">ENOVIA V5 VPM</button><button class="menu"><u>F</u>ichier</button><button class="menu"><u>E</u>dition</button><button class="menu"><u>A</u>ffichage</button><button class="menu"><u>I</u>nsertion</button><button class="menu"><u>O</u>utils</button><button class="menu"><u>F</u>enêtre</button><button class="menu"><u>A</u>ide</button>
  <div class="docbtns">
    <button aria-label="Réduire le document"><svg viewBox="0 0 16 16"><path d="M4 11h6" stroke="#74859c" stroke-width="2"/></svg></button>
    <button aria-label="Restaurer le document"><svg viewBox="0 0 16 16"><path d="M6 4h7v5h-7zM3 8h6v4H3z" fill="#dce9f7" stroke="#74859c"/></svg></button>
    <button aria-label="Fermer le document"><svg viewBox="0 0 16 16"><path d="M5 5l6 6M11 5l-6 6" stroke="#74859c" stroke-width="2"/></svg></button>
  </div>
</nav>

<div class="toolbar" role="toolbar" aria-label="Barre supérieure">
  <div class="group"><i class="grip"></i><button class="tool" aria-label="Envoyer"><svg><use href="#i-send"/></svg></button></div>
  <div class="group"><i class="grip"></i><button class="tool" aria-label="Déplacer"><svg><use href="#i-move"/></svg></button><button class="tool" aria-label="Tourner"><svg><use href="#i-rot"/></svg></button><button class="tool" aria-label="Sans plan"><svg><use href="#i-noplane"/></svg></button><button class="tool" aria-label="Ajouter"><svg><use href="#i-plus"/></svg></button><button class="tool" aria-label="Retirer"><svg><use href="#i-minus"/></svg></button><button class="tool" aria-label="Égaliser"><svg><use href="#i-equal"/></svg></button><button class="tool" aria-label="Règle"><svg><use href="#i-ruler"/></svg></button><button class="tool" aria-label="Sans repère"><svg><use href="#i-nopin"/></svg></button></div>
  <div class="group far"><i class="grip"></i><button class="tool" aria-label="Ouvrir un catalogue"><svg><use href="#i-folder"/></svg></button><span class="combo"><select aria-label="Source" disabled><option>Fichier</option></select><svg class="drop" viewBox="0 0 17 17"><path d="M0 0h17v17H0z" fill="#e8e8ee"/><path d="M0 17V0h17" fill="none" stroke="#fff" stroke-width="2"/><path d="M16 0v16H0" fill="none" stroke="#8c8c94"/><path d="M5 7h8l-4 4z" fill="#8e8e8e"/></svg></span></div>
  <div class="group far"><i class="grip"></i><button class="tool dd" aria-label="Corps"><svg><use href="#i-gears"/></svg></button><button class="tool dd" aria-label="Esquisse"><svg><use href="#i-scroll"/></svg></button><button class="tool" aria-label="Arbre"><svg><use href="#i-treegear"/></svg></button></div>
  <div class="group far"><i class="grip"></i><button class="tool" aria-label="Écrou 1"><svg><use href="#i-nut1"/></svg></button><button class="tool" aria-label="Écrou 2"><svg><use href="#i-nut2"/></svg></button><button class="tool" aria-label="Écrou 3"><svg><use href="#i-nut3"/></svg></button></div>
  <div class="group far"><i class="grip"></i><button class="tool dd" aria-label="Texte"><svg viewBox="0 0 28 28"><text x="7" y="12" class="t-abc">ABC</text><path d="M7 14h16M12 14l-8 6M3 17v4h4" stroke="#1c1464" fill="none"/></svg></button><button class="tool dd" aria-label="Note"><svg><use href="#i-tag"/></svg></button><button class="tool" aria-label="Tampon"><svg><use href="#i-stamp"/></svg></button></div>
  <div class="group"><i class="grip"></i><button class="tool" disabled aria-label="Filtre 1"><svg><use href="#i-g1"/></svg></button><button class="tool" disabled aria-label="Filtre 2"><svg><use href="#i-g2"/></svg></button><button class="tool" disabled aria-label="Filtre 3"><svg><use href="#i-g3"/></svg></button><button class="tool" disabled aria-label="Filtre 4"><svg><use href="#i-g4"/></svg></button></div>
  <div class="group"><i class="grip"></i><button class="tool dd" aria-label="Poche"><svg><use href="#i-pocket"/></svg></button><button class="tool dd" aria-label="Gorge"><svg><use href="#i-groove"/></svg></button><button class="tool" aria-label="Trou"><svg><use href="#i-hole"/></svg></button><button class="tool dd" aria-label="Nervure"><svg><use href="#i-rib"/></svg></button><button class="tool dd" aria-label="Raidisseur"><svg><use href="#i-cube"/></svg></button><button class="tool dd" aria-label="Lissage"><svg><use href="#i-loft"/></svg></button></div>
  <div class="group last"><i class="grip"></i><button class="tool" aria-label="Point"><svg><use href="#i-point"/></svg></button><button class="tool" aria-label="Courbe"><svg><use href="#i-spline"/></svg></button><button class="tool" aria-label="Surface"><svg><use href="#i-sweep"/></svg></button><button class="tool" aria-label="Bloc"><svg><use href="#i-pbox"/></svg></button><i class="rule"></i><button class="tool" aria-label="Face"><svg><use href="#i-cc1"/></svg></button><button class="tool" aria-label="Arête"><svg><use href="#i-cc2"/></svg></button><i class="rule"></i><button class="tool dd" aria-label="Assemblage"><svg><use href="#i-asm"/></svg></button><i class="rule"></i></div>
  <button class="more" aria-label="Suite"><svg viewBox="0 0 10 8"><path d="M2 1l3 3-3 3M6 1l3 3-3 3" fill="none" stroke="#9c9cac"/><path d="M1 1l3 3-3 3M5 1l3 3-3 3" fill="none" stroke="#fff"/></svg></button>
</div>

<main class="work">
  <div class="scroll" aria-hidden="true">
    <button class="sarrow" tabindex="-1"><svg viewBox="0 0 11 12"><path d="M2 8h7l-3-5z"/></svg></button>
    <div class="thumb"></div><div class="track"></div>
    <button class="sarrow" tabindex="-1"><svg viewBox="0 0 11 12"><path d="M2 4h7l-3 5z"/></svg></button>
  </div>
  <section class="canvas" aria-label="Vue 3D">
    <div class="tree">
      <div class="row root"><svg class="ti"><use href="#i-part"/></svg><span class="label">Part1</span></div>
      <ul class="lv1">
        <li><div class="row"><svg class="ti"><use href="#i-tplane"/></svg><span class="label">Plan xy</span></div></li>
        <li><div class="row"><svg class="ti"><use href="#i-tplane"/></svg><span class="label">Plan yz</span></div></li>
        <li><div class="row"><svg class="ti"><use href="#i-tplane"/></svg><span class="label">Plan zx</span></div></li>
        <li><div class="row"><button class="knob" aria-label="Replier"><svg><use href="#s-minus"/></svg></button><svg class="ti"><use href="#i-body"/></svg><span class="label">Corps principal</span></div>
          <ul class="lv2">
            <li><div class="row"><button class="knob" aria-label="Déplier"><svg><use href="#s-plus"/></svg></button><svg class="ti" viewBox="3 3 22 22"><use href="#i-pad" width="28" height="28"/></svg><span class="label">Extrusion.1</span></div></li>
            <li><div class="row"><button class="knob" aria-label="Déplier"><svg><use href="#s-plus"/></svg></button><svg class="ti"><use href="#i-tsketch"/></svg><span class="label">Esquisse.2</span></div></li>
            <li><div class="row"><button class="knob" aria-label="Déplier"><svg><use href="#s-plus"/></svg></button><svg class="ti" viewBox="3 3 22 22"><use href="#i-pocket" width="28" height="28"/></svg><span class="label">Poche.2</span></div></li>
            <li><div class="row"><svg class="ti" viewBox="3 3 22 22"><use href="#i-pocket" width="28" height="28"/></svg><span class="label">Poche.4</span></div></li>
            <li><div class="row"><button class="knob" aria-label="Déplier"><svg><use href="#s-plus"/></svg></button><svg class="ti" viewBox="3 3 22 22"><use href="#i-shaft" width="28" height="28"/></svg><span class="label">Révolution.2</span></div></li>
            <li><div class="row"><button class="knob" aria-label="Replier"><svg><use href="#s-minus"/></svg></button><svg class="ti" viewBox="3 3 22 22"><use href="#i-chamfer" width="28" height="28"/></svg><span class="label">Chanfrein.3</span></div>
              <ul class="lv3">
                <li><div class="row"><svg class="ti"><use href="#i-param"/></svg><span class="label">Longueur1</span></div></li>
                <li><div class="row"><svg class="ti"><use href="#i-param"/></svg><span class="label">Angle</span></div></li>
              </ul></li>
            <li><div class="row"><button class="knob" aria-label="Déplier"><svg><use href="#s-plus"/></svg></button><svg class="ti" viewBox="3 3 22 22"><use href="#i-fillet" width="28" height="28"/></svg><span class="label">Congé arête.7</span></div></li>
            <li><div class="row"><svg class="ti" viewBox="2 2 24 24"><use href="#i-pattern" width="28" height="28"/></svg><span class="label">Répétition circulaire.5</span></div></li>
            <li class="open"><div class="row"><button class="knob" aria-label="Déplier"><svg><use href="#s-plus"/></svg></button><svg class="ti" viewBox="3 3 22 22"><use href="#i-chamfer" width="28" height="28"/></svg><span class="label">Chanfrein.5</span></div></li>
          </ul></li>
      </ul>
    </div>
    <svg class="part" width="190" height="450" viewBox="0 0 190 450" aria-label="Pièce">
      <path d="M0 7q11 1 12 15 2 8 10 9 7 0 10 2h121q1-9 8-10 11 0 14-13Q176 1 188 0v448q-12-2-13-14-3-11-12-12-8-2-9-9H32q-4 4-10 4-9 2-10 12-2 11-12 11z" fill="#000"/>
      <path d="M1 7v433M12 18v410M23 30v388M32 33v380M154 33v380M165 22v400M176 11v426M188 0v448M32 391h122" fill="none" stroke="#fff" stroke-width="2" shape-rendering="crispEdges"/>
      <path d="M1 414q9-1 11-6 2-11 10-12 7-1 10-5M154 391q3 9 11 9 9 2 12 9 2 11 11 11" fill="none" stroke="#fff" stroke-width="2"/>
      <path d="M21 193h2v2h-2zM21 196h2v2h-2zM21 226h2v2h-2zM21 259h2v2h-2z" fill="#000"/>
    </svg>
    <svg class="compass" width="68" height="86" viewBox="0 0 68 86" aria-label="Boussole">
      <path d="M20 18q33 1 34 34H20z" fill="url(#ndither)" stroke="#dcc8ff" stroke-width="2"/>
      <path d="M20 8v72M1 80h43" stroke="#dcc8ff" stroke-width="2"/><circle cx="20" cy="9" r="3" fill="#dcc8ff"/><path d="M16 75h9v9h-9z" fill="#d00000"/>
      <text x="25" y="9" class="t-ax">z</text><text x="27" y="53" class="t-ax">y</text><text x="59" y="52" class="t-ax">x</text>
    </svg>
    <svg class="ghost" width="104" height="208" viewBox="0 0 104 208" aria-hidden="true">
      <g fill="#fff" fill-opacity=".04" stroke="#fff" stroke-opacity=".24" stroke-width="6"><circle cx="52" cy="38" r="35"/><path d="M21 88h64v64H21z"/><path d="M3 167h98v38H3z"/></g>
      <g fill="#fff" fill-opacity=".2"><circle cx="45" cy="57" r="7"/><path d="M29 134h11v11H29zM12 188l79 11H12z"/></g>
    </svg>
    <svg class="triad" width="27" height="30" viewBox="0 0 27 30" aria-hidden="true"><path d="M1 10v16h19" fill="none" stroke="#fff" shape-rendering="crispEdges"/><text x="1" y="9" class="t-tri">z</text><text x="18" y="28" class="t-tri">x</text></svg>
  </section>
  <aside class="side" aria-label="Barres latérales">
    <div class="col first">
      <i class="vgrip"></i><button class="tool" disabled aria-label="Contraintes"><svg><use href="#i-cons"/></svg></button><button class="tool" aria-label="Cotation"><svg><use href="#i-dim"/></svg></button>
      <i class="vgrip"></i><button class="tool dd" aria-label="Translation"><svg><use href="#i-trans"/></svg></button><i class="vrule"></i><button class="tool" aria-label="Symétrie"><svg><use href="#i-mirror"/></svg></button><button class="tool dd" aria-label="Répétition"><svg><use href="#i-pattern"/></svg></button><i class="vrule"></i><button class="tool dd" aria-label="Échelle"><svg><use href="#i-scale"/></svg></button>
      <i class="vgrip"></i><button class="tool dd" aria-label="Congé"><svg><use href="#i-fillet"/></svg></button><button class="tool" aria-label="Chanfrein"><svg><use href="#i-chamfer"/></svg></button><button class="tool dd" aria-label="Dépouille"><svg><use href="#i-draft"/></svg></button><button class="tool" aria-label="Coque"><svg><use href="#i-shell"/></svg></button><button class="tool" aria-label="Surépaisseur"><svg><use href="#i-thick"/></svg></button><button class="tool" aria-label="Taraudage"><svg><use href="#i-thread"/></svg></button><button class="tool dd" aria-label="Retirer une face"><svg><use href="#i-remove"/></svg></button>
      <i class="vgrip wide"></i><button class="tool" aria-label="Point"><svg><use href="#i-point"/></svg></button><button class="tool" aria-label="Droite"><svg><use href="#i-line"/></svg></button><button class="tool" aria-label="Plan"><svg><use href="#i-plane"/></svg></button>
    </div>
    <div class="col">
      <i class="vgrip"></i><button class="tool" aria-label="Matériau"><svg><use href="#i-mat"/></svg></button>
      <i class="vgrip mid"></i><button class="tool dd" aria-label="Sélection"><svg><use href="#i-select"/></svg></button>
      <i class="vgrip"></i><button class="tool dd" aria-label="Esquisse"><svg><use href="#i-sketch"/></svg></button>
      <i class="vgrip"></i><button class="tool dd" aria-label="Extrusion"><svg><use href="#i-pad"/></svg></button><button class="tool dd" aria-label="Poche"><svg><use href="#i-pocket"/></svg></button><button class="tool" aria-label="Révolution"><svg><use href="#i-shaft"/></svg></button><button class="tool" aria-label="Gorge"><svg><use href="#i-groove"/></svg></button><button class="tool" aria-label="Trou"><svg><use href="#i-hole"/></svg></button><button class="tool" aria-label="Nervure"><svg><use href="#i-rib"/></svg></button><button class="tool" aria-label="Rainure"><svg><use href="#i-slot"/></svg></button><button class="tool dd" aria-label="Raidisseur"><svg><use href="#i-cube"/></svg></button><button class="tool" aria-label="Lissage"><svg><use href="#i-loft"/></svg></button><button class="tool" aria-label="Retrait lissé"><svg><use href="#i-rloft"/></svg></button>
      <i class="vgrip"></i><button class="tool dd" aria-label="Surface épaisse"><svg><use href="#i-surf"/></svg></button>
    </div>
  </aside>
</main>

<div class="toolbar bottom" role="toolbar" aria-label="Barre inférieure">
  <div class="group"><i class="grip"></i><button class="tool" aria-label="Nouveau"><svg><use href="#i-new"/></svg></button><button class="tool" aria-label="Ouvrir"><svg><use href="#i-folder"/></svg></button><button class="tool" aria-label="Enregistrer"><svg><use href="#i-save"/></svg></button><button class="tool" aria-label="Imprimer"><svg><use href="#i-print"/></svg></button><button class="tool" disabled aria-label="Couper"><svg><use href="#i-cut"/></svg></button><button class="tool" disabled aria-label="Copier"><svg><use href="#i-copy"/></svg></button><button class="tool" aria-label="Coller"><svg><use href="#i-paste"/></svg></button><button class="tool dd" aria-label="Annuler"><svg><use href="#i-undo"/></svg></button><button class="tool dd" aria-label="Rétablir"><svg><use href="#i-redo"/></svg></button><button class="tool" aria-label="Aide"><svg viewBox="0 0 28 28"><path d="M5 6v14l3-3 4 7 2-2-3-6h4z" fill="#ffffa0" stroke="#120a50"/><text x="13" y="20" class="t-q">?</text></svg></button></div>
  <div class="group"><i class="grip"></i><button class="tool" aria-label="Formule"><svg viewBox="0 0 28 28"><text x="4" y="20" class="t-f">f<tspan class="t-x">(x)</tspan></text></svg></button><button class="tool" aria-label="Commentaire"><svg><use href="#i-talk"/></svg></button><button class="tool slim" disabled aria-label="Lien"><svg><use href="#i-link"/></svg></button><button class="tool dd" aria-label="Table"><svg><use href="#i-table"/></svg></button><button class="tool" aria-label="Relations"><svg><use href="#i-rel"/></svg></button><button class="tool dd" aria-label="Verrou"><svg><use href="#i-lock"/></svg></button><button class="tool" aria-label="Équation"><svg><use href="#i-rule"/></svg></button></div>
  <div class="group"><i class="grip"></i><button class="tool" aria-label="Survol"><svg><use href="#i-fly"/></svg></button><button class="tool" aria-label="Centrer tout"><svg><use href="#i-fit"/></svg></button><button class="tool" aria-label="Panoramique"><svg><use href="#i-pan"/></svg></button><button class="tool" aria-label="Rotation"><svg><use href="#i-rotate"/></svg></button><button class="tool" aria-label="Zoom avant"><svg><use href="#i-zin"/></svg></button><button class="tool" aria-label="Zoom arrière"><svg><use href="#i-zout"/></svg></button><button class="tool" aria-label="Vue normale"><svg><use href="#i-normal"/></svg></button><button class="tool" aria-label="Multi-vue"><svg><use href="#i-multi"/></svg></button><button class="tool dd" aria-label="Vue isométrique"><svg><use href="#i-iso"/></svg></button><button class="tool dd lit" aria-label="Rendu"><svg><use href="#i-shade"/></svg></button><button class="tool" aria-label="Cacher"><svg><use href="#i-hide"/></svg></button><button class="tool" aria-label="Espace visible"><svg><use href="#i-swap"/></svg></button></div>
  <div class="group"><i class="grip stub"></i></div>
  <div class="group"><i class="grip"></i><button class="tool" aria-label="Impression 3D"><svg><use href="#i-cap"/></svg></button></div>
  <div class="group"><i class="grip"></i><button class="tool" aria-label="Mesurer"><svg><use href="#i-meas"/></svg></button><button class="tool" aria-label="Mesurer un élément"><svg><use href="#i-caliper"/></svg></button><button class="tool" aria-label="Inertie"><svg><use href="#i-weight"/></svg></button></div>
  <div class="group far"><i class="grip"></i><button class="tool" aria-label="Capture"><svg><use href="#i-camera"/></svg></button></div>
  <div class="group last"><i class="grip"></i><button class="tool" disabled aria-label="Mise à jour"><svg><use href="#i-update"/></svg></button><button class="tool" aria-label="Mise à jour manuelle"><svg><use href="#i-hand"/></svg></button><button class="tool" aria-label="Repère"><svg><use href="#i-axis"/></svg></button><button class="tool" aria-label="Dimensions"><svg viewBox="0 0 28 28"><text x="4" y="12" class="t-n">10,<tspan fill="#1010d0">1</tspan></text><text x="4" y="22" class="t-n">10,<tspan fill="#1010d0">0</tspan></text></svg></button><button class="tool dd" aria-label="Cote moyenne"><svg><use href="#i-mean"/></svg></button><button class="tool" aria-label="Historique"><svg><use href="#i-bolt"/></svg></button></div>
  <button class="more" aria-label="Suite"><svg viewBox="0 0 10 8"><path d="M2 1l3 3-3 3M6 1l3 3-3 3" fill="none" stroke="#9c9cac"/><path d="M1 1l3 3-3 3M5 1l3 3-3 3" fill="none" stroke="#fff"/></svg></button>
  <svg class="logo" width="42" height="32" viewBox="0 0 42 32" aria-label="Dassault Systèmes CATIA"><path d="M8 2h7q3 1-1 4l-4 2q5 0 3 4" fill="none" stroke="#e03030" stroke-width="2"/><path d="M4 12h6q5 2 1 6-4 4-10 4l6-8" fill="none" stroke="#4a2a90" stroke-width="2"/><path d="M24 8q-9-1-6 4l3 3q2 6-7 6" fill="none" stroke="#f0a020" stroke-width="2"/><text x="7" y="30" class="t-catia">CATIA</text></svg>
</div>

<footer class="status">
  <label class="msg" for="cmd">Sélectionnez un objet ou une commande</label>
  <input id="cmd" class="cmd" type="text">
  <button class="sbtn" aria-label="Mode fenêtre"><svg viewBox="0 0 20 14"><path d="M4 3h7v7H4zM13 12h4V2" fill="none" stroke="#fff" stroke-width="2"/><path d="M3 2h7v7H3zM12 11h4V1" fill="none" stroke="#9a9aa6" stroke-width="2"/></svg></button>
  <button class="sbtn" aria-label="Informations"><svg viewBox="0 0 20 14"><circle cx="9" cy="6" r="5" fill="#e4e4f0" stroke="#9a9aa6" stroke-width="2"/><path d="M9 5v5M9 2v2M3 13h14V5" fill="none" stroke="#9a9aa6" stroke-width="2"/></svg></button>
</footer>
<div class="taskedge"></div>
</body>
</html>
```
FILE: styles.css
```css
* { box-sizing: border-box; }
body {
  margin: 0;
  height: 100vh;
  display: flex;
  flex-direction: column;
  overflow: hidden;
  background: #d0cfe4;
  color: #111;
  font: 11px/16px "Open Sans", "Noto Sans", sans-serif;
}
button { margin: 0; padding: 0; border: 0; background: none; color: inherit; font: inherit; }
svg { display: block; flex: none; }
.sprite { position: absolute; }

/* title bar */
.titlebar {
  display: flex;
  align-items: flex-start;
  height: 22px;
  flex: none;
  border-bottom: 1px solid #1c2230;
  background:
    radial-gradient(ellipse 30px 20px at 347px 16px, #92c2ea, transparent),
    radial-gradient(ellipse 26px 18px at 440px 18px, #86b4da, transparent),
    radial-gradient(ellipse 30px 20px at 532px 16px, #92c8f2, transparent),
    radial-gradient(ellipse 30px 20px at 628px 16px, #92c8f2, transparent),
    radial-gradient(ellipse 30px 20px at 727px 16px, #92c8f2, transparent),
    radial-gradient(ellipse 30px 20px at 825px 18px, #6fa4cc, transparent),
    radial-gradient(ellipse 30px 20px at 920px 16px, #92c8f2, transparent),
    radial-gradient(ellipse 30px 20px at 1018px 18px, #6a9cc0, transparent),
    radial-gradient(ellipse 34px 20px at 1118px 16px, #86bce4, transparent),
    linear-gradient(90deg, #bcd0ea 0, #d6e6f8 90px, #a9c6e6 190px, #8fb4da 204px, #16222e 222px, #233240 300px, #41525f 395px, #1c2833 480px, #46586a 580px, #2b3946 680px, #44535f 770px, #232f3a 870px, #4c5d6c 970px, #2a3540 1060px, #3a4654 1160px, #8791a4 1240px, #6d7a8c 1366px);
}
.appicon { width: 15px; height: 15px; margin: 3px 5px 0 1px; }
.title { margin: 3px 0 0; font: 400 12px/16px "Open Sans", "Noto Sans", sans-serif; }
.winbtns { display: flex; height: 18px; margin-left: auto; margin-right: 2px; border: 1px solid #39414f; border-top: 0; border-radius: 0 0 5px 5px; overflow: hidden; }
.winbtn { width: 28px; border-right: 1px solid #4a5160; background: linear-gradient(#c4cad4 0 45%, #858f9e 50%, #aab2bf); box-shadow: inset 0 0 0 1px #ffffff66; }
.winbtn svg { height: 17px; margin: 0 auto; }
.winbtn.close { width: 48px; border-right: 0; background: linear-gradient(#e0a090 0 45%, #b93a20 50%, #d4694a); }

/* menu bar */
.menubar { display: flex; align-items: stretch; height: 20px; flex: none; }
.docicon { width: 18px; height: 18px; margin: 1px 2px 0 1px; }
.menu { padding: 0 12px; }
.menu.start { padding: 0 7px; background: #ffe2b4; }
.menu.tight { padding: 0 4px 0 7px; }
.docbtns { display: flex; gap: 2px; margin: 1px 2px 0 auto; }
.docbtns button { width: 17px; height: 18px; border: 1px solid #9db4cf; background: #dce9f7; }
.docbtns svg { width: 15px; height: 16px; }

/* horizontal toolbars */
.toolbar {
  display: flex;
  align-items: flex-start;
  height: 37px;
  flex: none;
  padding: 4px 5px 0 5px;
  overflow: hidden;
  background: linear-gradient(#fff 0, #d8d7ea 10px, #cfcee4 20px, #c8c7dc 27px, #9a9ab0 35px);
  border-bottom: 2px solid #5e5e66;
}
.toolbar.bottom { padding-top: 6px; border-bottom-width: 1px; }
.group { display: flex; flex: none; margin-right: 12px; }
.bottom .group { margin-right: 11px; }
.group.far, .bottom .group.far { margin-right: 17px; }
.group.last, .bottom .group.last { margin-right: 0; }
.grip { width: 3px; height: 17px; margin-right: 5px; border-left: 2px solid #fff; border-right: 1px solid #98989f; }
.grip.stub { height: 3px; margin-right: 4px; }
.rule { width: 2px; height: 32px; margin: 0 3px; border-left: 1px solid #8e8e98; border-right: 1px solid #fff; }
.tool { position: relative; width: 28px; height: 28px; flex: none; }
.tool.slim { width: 22px; overflow: hidden; }
.tool.slim svg { margin-left: -3px; }
.tool svg { width: 28px; height: 28px; shape-rendering: crispEdges; filter: drop-shadow(2px 2px 0 #b4b4bc66); }
.tool.dd { width: 30px; }
.tool.dd::after {
  content: "";
  position: absolute;
  left: 22px;
  top: 24px;
  border: 4px solid transparent;
  border-top-color: #000;
  border-bottom: 0;
}
.tool.lit::after { background: #fff; }
.combo { display: flex; position: relative; width: 97px; height: 22px; margin: 3px 0 0 1px; }
.combo select { width: 100%; height: 100%; margin: 0; padding: 0 20px 0 3px; appearance: none; border: 2px solid #fff; border-top-color: #8c8c94; border-left-color: #8c8c94; border-radius: 0; background: #ececee; color: #858585; opacity: 1; font: 12px "Open Sans", "Noto Sans", sans-serif; }
.drop { position: absolute; right: 2px; top: 2px; width: 17px; height: 18px; pointer-events: none; }
.more { margin-left: auto; }
.more svg { width: 10px; height: 8px; }
.logo { margin: -5px 0 0 8px; }

/* work area */
.work { display: flex; flex: 1; min-height: 0; }
.scroll { display: flex; flex-direction: column; width: 13px; border-left: 2px solid #8c8c8c; background: #7b7bff; }
.sarrow { height: 13px; border-bottom: 1px solid #26265e; }
.sarrow svg { width: 11px; height: 12px; }
.thumb { flex: 444; border-bottom: 1px solid #26265e; background: #7b7bff; }
.track { flex: 157; background: repeating-conic-gradient(#9a9ae6 0 25%, #6e6ee8 0 50%) 0 0 / 2px 2px; }
.canvas { position: relative; flex: 1; min-width: 0; overflow: hidden; background: linear-gradient(#333366, #464676 67%, #787898 84%, #adadc1); }

/* specification tree */
.tree { padding-top: 74px; color: #fff; font: 16px/24px "Noto Sans", "Open Sans", sans-serif; }
.tree ul { list-style: none; margin: 0; padding: 0; }
.tree .lv1 { margin-left: 9px; }
.tree .lv2 { margin-left: 26px; }
.tree .lv3 { margin-left: 25px; }
.tree li { position: relative; }
.tree li::before { content: ""; position: absolute; left: 0; top: 0; bottom: 0; width: 2px; background: #fff; }
.tree li:first-child::before { top: -8px; }
.tree li:last-child::before { bottom: auto; height: 17px; }
.tree li.open:last-child::before { height: 36px; }
.tree .row { position: relative; display: flex; align-items: flex-start; height: 35px; padding-left: 17px; }
.tree li:nth-child(even) > .row { height: 36px; }
.tree li > .row::before { content: ""; position: absolute; left: 0; top: 15px; width: 16px; height: 2px; background: #fff; }
.tree .root { height: 36px; padding-left: 2px; }
.ti { width: 28px; height: 28px; shape-rendering: crispEdges; }
.label { margin: 8px 0 0 4px; padding: 0 2px 0 1px; border-radius: 3px; background: #333366; white-space: pre; }
.knob { position: absolute; left: -7px; top: 8px; width: 16px; height: 16px; }
.knob svg { width: 16px; height: 16px; }

/* items placed in the 3D view */
.part { position: absolute; left: 630px; top: 96px; }
.compass { position: absolute; right: 31px; top: 0; }
.ghost { position: absolute; right: 8px; top: 202px; }
.triad { position: absolute; right: 0; bottom: 19px; }

/* side toolbars */
.side { display: flex; gap: 5px; width: 78px; padding: 5px 0 0 5px; border-left: 1px solid #fff; background: linear-gradient(90deg, #fff 0, #dcdbee 8px, #d0cfe4 14px, #cfcee4 68px, #9c9cb4 100%); }
.col { display: flex; flex-direction: column; width: 35px; }
.col.first { width: 36px; padding-top: 10px; }
.col .tool.dd { width: 28px; height: 30px; }
.vgrip { flex: none; width: 16px; height: 3px; margin: 8px 0 6px; border-top: 2px solid #fff; border-bottom: 1px solid #98989f; }
.vgrip:first-child { margin-top: 0; }
.vgrip.wide { margin-top: 15px; }
.vgrip.mid { margin-top: 11px; }
.vrule { flex: none; height: 2px; margin: 3px 0; border-top: 1px solid #98989f; border-bottom: 1px solid #fff; }

/* status bar */
.status { display: flex; align-items: center; height: 22px; flex: none; padding-left: 3px; border-top: 1px solid #fff; }
.msg { flex: 1; }
.cmd { width: 300px; height: 19px; padding: 0 3px; border: 1px solid #8c8c98; border-color: #6c6c78 #fff #fff #6c6c78; background: #fff; font: inherit; }
.sbtn { width: 34px; height: 20px; border-right: 1px solid #666; border-bottom: 1px solid #888; border-left: 1px solid #fff; }
.sbtn svg { width: 20px; height: 14px; margin: 0 auto; }
.taskedge { height: 2px; flex: none; border-top: 1px solid #34384a; background: linear-gradient(90deg, #b8d0ec 0 122px, #fff 122px 764px, #b8d0ec 764px); }

/* lettering used inside drawings */
.t-abc { font: 8px "Liberation Sans", sans-serif; fill: #1c1464; }
.t-q { font: 700 18px "Liberation Sans", sans-serif; fill: #0c2a6a; }
.t-f { font: italic 20px "Liberation Serif", serif; }
.t-x { font-size: 13px; }
.t-n { font: 700 10px "Liberation Sans", sans-serif; }
.t-ax { font: 13px "Noto Sans", sans-serif; fill: #ffff20; }
.t-tri { font: 13px "Noto Sans", sans-serif; fill: #fff; }
.t-catia { font: italic 700 10px "Liberation Sans", sans-serif; fill: #4a2a90; }
```
